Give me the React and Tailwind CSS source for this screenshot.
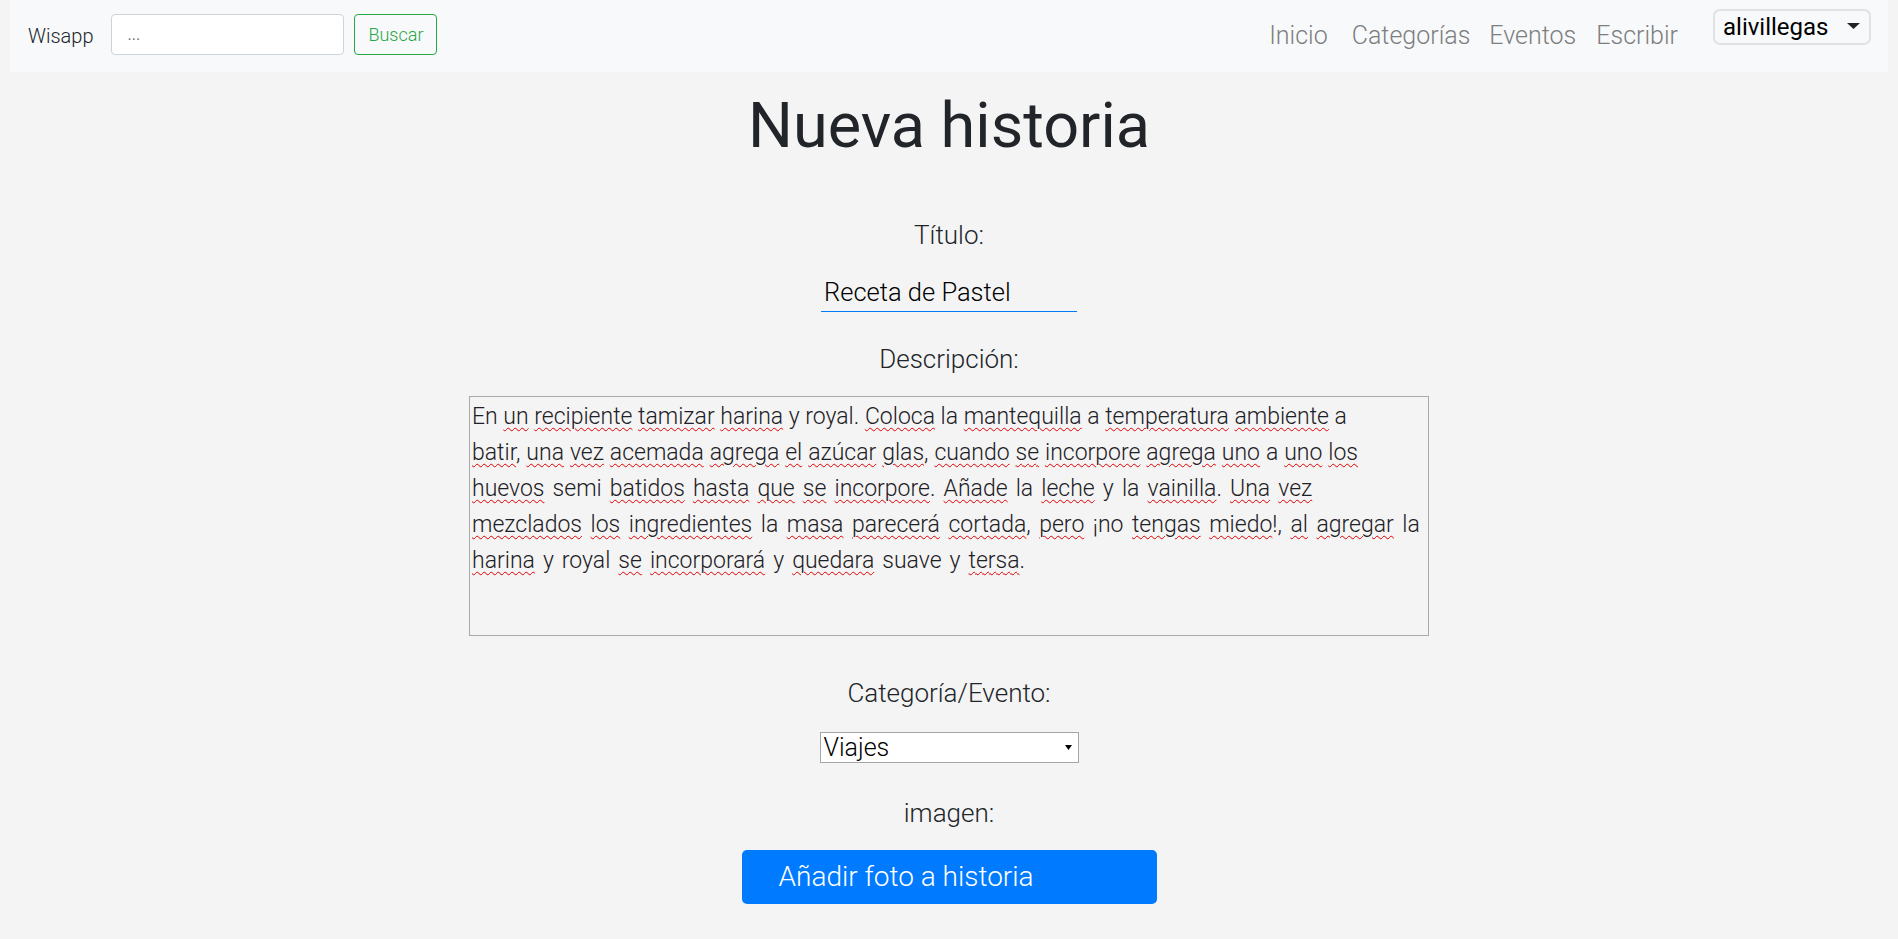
import React from "react";

// cada línea con su espaciado de palabras, para que el corte coincida con el textarea original
const descripcion = [
  ["En *un *recipiente *tamizar *harina y royal. *Coloca la *mantequilla a *temperatura *ambiente a", ""],
  ["*batir, *una *vez *acemada *agrega *el *azúcar *glas, *cuando *se *incorpore *agrega *uno a *uno *los", "[word-spacing:0.3px]"],
  ["*huevos semi *batidos *hasta *que *se *incorpore. *Añade la *leche y la *vainilla. *Una *vez", "[word-spacing:2.5px]"],
  ["*mezclados *los *ingredientes la *masa *parecerá *cortada, *pero ¡no *tengas *miedo!, *al *agregar la", "[word-spacing:2.9px]"],
  ["*harina y royal *se *incorporará y *quedara suave y *tersa.", "[word-spacing:2.4px]"],
];

// palabras marcadas por el corrector (subrayado rojo ondulado)
const Linea = ({ texto, extra }) => {
  const tokens = texto.split(" ");
  return (
    <div className={`whitespace-nowrap ${extra}`}>
      {tokens.map((tok, i) => {
        const sep = i < tokens.length - 1 ? " " : "";
        if (!tok.startsWith("*")) return <span key={i}>{tok + sep}</span>;
        const m = tok.slice(1).match(/^(.*?)([.,!]*)$/);
        return (
          <span key={i}>
            <span className="underline decoration-wavy decoration-[#e00000] decoration-1 underline-offset-[3px]">
              {m[1]}
            </span>
            {m[2] + sep}
          </span>
        );
      })}
    </div>
  );
};

const Navbar = () => (
  <nav className="mx-[10px] h-[72px] bg-[#f8f9fa] flex items-center pl-[18px] pr-[17px]">
    <a className="text-[20px] font-light text-[#212529]">Wisapp</a>
    <form className="flex items-center ml-[18px] mb-[3px]">
      <input
        placeholder="..."
        className="w-[233px] h-[41px] bg-white border border-[#ced4da] rounded-[4px] px-[15px] text-[16px] placeholder:text-[#6c757d] outline-none"
      />
      <button
        type="button"
        className="ml-[10px] w-[83px] h-[41px] border border-[#28a745] rounded-[4px] text-[#28a745] text-[18px] font-light"
      >
        Buscar
      </button>
    </form>
    <div className="ml-auto flex items-center text-[25px] font-light text-[#7d7e7f]">
      <a className="mr-[24px]">Inicio</a>
      <a className="mr-[19px]">Categorías</a>
      <a className="mr-[20px]">Eventos</a>
      <a>Escribir</a>
    </div>
    <button
      type="button"
      className="ml-[35px] mb-[18px] h-[36px] w-[158px] border-2 border-[#e1e2e3] rounded-[7px] flex items-center pl-[8px] pr-[9px] text-[24px] text-black"
    >
      <span>alivillegas</span>
      <svg width="13" height="6" viewBox="0 0 13 6" className="ml-auto mb-[2px]">
        <polygon points="0,0 13,0 6.5,6" fill="#212529" />
      </svg>
    </button>
  </nav>
);

export default function App() {
  return (
    <div className="min-h-screen bg-[#f4f4f4] font-['Roboto',sans-serif] text-[#212529]">
      <Navbar />
      <main className="flex flex-col items-center">
        <h1 className="mt-[16px] text-[63px] leading-[76px] font-normal">Nueva historia</h1>

        <label className="mt-[56px] text-[26px] leading-[30px] font-light">Título:</label>
        <input
          readOnly
          value="Receta de Pastel"
          className="mt-[26px] w-[256px] h-[36px] border-b border-[#007bff] bg-transparent pl-[3px] pb-[3px] text-[25.5px] font-light text-black outline-none"
        />

        <label className="mt-[32px] text-[26px] leading-[30px] font-light">Descripción:</label>
        <div className="mt-[22px] w-[960px] h-[240px] border border-[#a9a9a9] px-[2px] pt-[2px] text-[23px] leading-[36px] font-light text-[#1d2024]">
          {descripcion.map(([l, extra], i) => (
            <Linea key={i} texto={l} extra={extra} />
          ))}
        </div>

        <label className="mt-[42px] text-[26px] leading-[30px] font-light">Categoría/Evento:</label>
        <div className="mt-[24px] w-[259px] h-[31px] bg-white border border-[#a6a6a6] flex items-center pl-[3px] pr-[6px] text-[25px] leading-[29px] font-light text-black">
          <span>Viajes</span>
          <svg width="7" height="5" viewBox="0 0 7 5" className="ml-auto">
            <polygon points="0,0 7,0 3.5,5" fill="#000" />
          </svg>
        </div>

        <label className="mt-[35px] text-[26px] leading-[30px] font-light">imagen:</label>
        <button
          type="button"
          className="mt-[22px] w-[415px] h-[54px] bg-[#007bff] rounded-[5px] pl-[37px] text-left text-[28px] font-light text-white"
        >
          Añadir foto a historia
        </button>
      </main>
    </div>
  );
}
